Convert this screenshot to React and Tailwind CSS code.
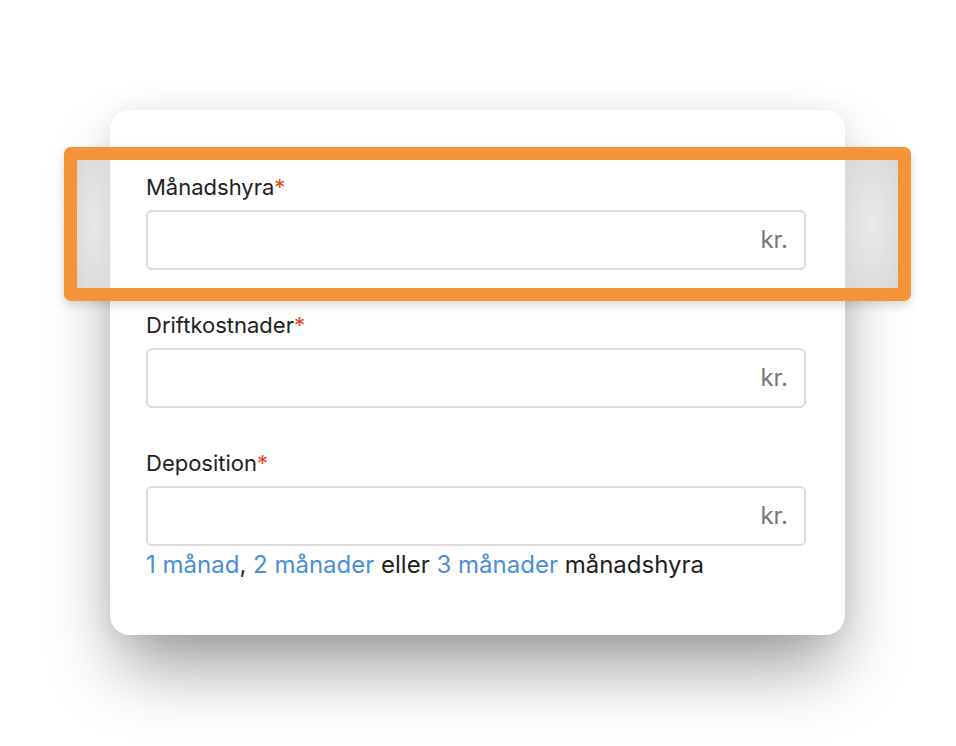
const FONT = { fontFamily: 'Inter, "Noto Sans", "Liberation Sans", sans-serif' };

function Field({ label, children }) {
  return (
    <div>
      <label className="block text-[22px] leading-[26px] text-[#222222]">
        {label}
        <span className="text-[#e2431f]">*</span>
      </label>
      <div className="mt-[10px] h-[60px] w-[660px] rounded-[6px] border-2 border-[#dcdcdc] bg-white flex items-center justify-end pr-[16px]">
        <span className="text-[24px] text-[#777777]">kr.</span>
      </div>
      {children}
    </div>
  );
}

export default function App() {
  return (
    <div className="relative w-full h-[746px] bg-white overflow-hidden" style={FONT}>
      <div className="pt-[110px] pl-[110px]">
        <div className="w-[735px] h-[525px] rounded-[20px] bg-white pt-[64px] pl-[36px] shadow-[0_40px_70px_-10px_rgba(0,0,0,0.4),0_0_30px_rgba(0,0,0,0.07)] flex flex-col gap-[42px]">
          <Field label="Månadshyra" />
          <Field label="Driftkostnader" />
          <Field label="Deposition">
            <p className="mt-[5px] text-[24px] leading-[28px] text-[#1f1f1f]">
              <a className="text-[#4a8fd2]">1 månad</a>, <a className="text-[#4a8fd2]">2 månader</a> eller{' '}
              <a className="text-[#4a8fd2]">3 månader</a> månadshyra
            </p>
          </Field>
        </div>
      </div>

      {/* highlight */}
      <div className="absolute left-[64px] top-[147px] w-[847px] h-[154px] rounded-[7px] border-[13px] border-[#f29438] shadow-[0_4px_10px_rgba(0,0,0,0.15)]">
        <div className="absolute left-0 top-0 bottom-0 w-[33px] bg-[radial-gradient(ellipse_at_center,#e8e8e8,#d8d8d8)]" />
        <div className="absolute right-0 top-0 bottom-0 w-[53px] bg-[radial-gradient(ellipse_at_center,#eaeaea,#d8d8d8)]" />
      </div>
    </div>
  );
}
